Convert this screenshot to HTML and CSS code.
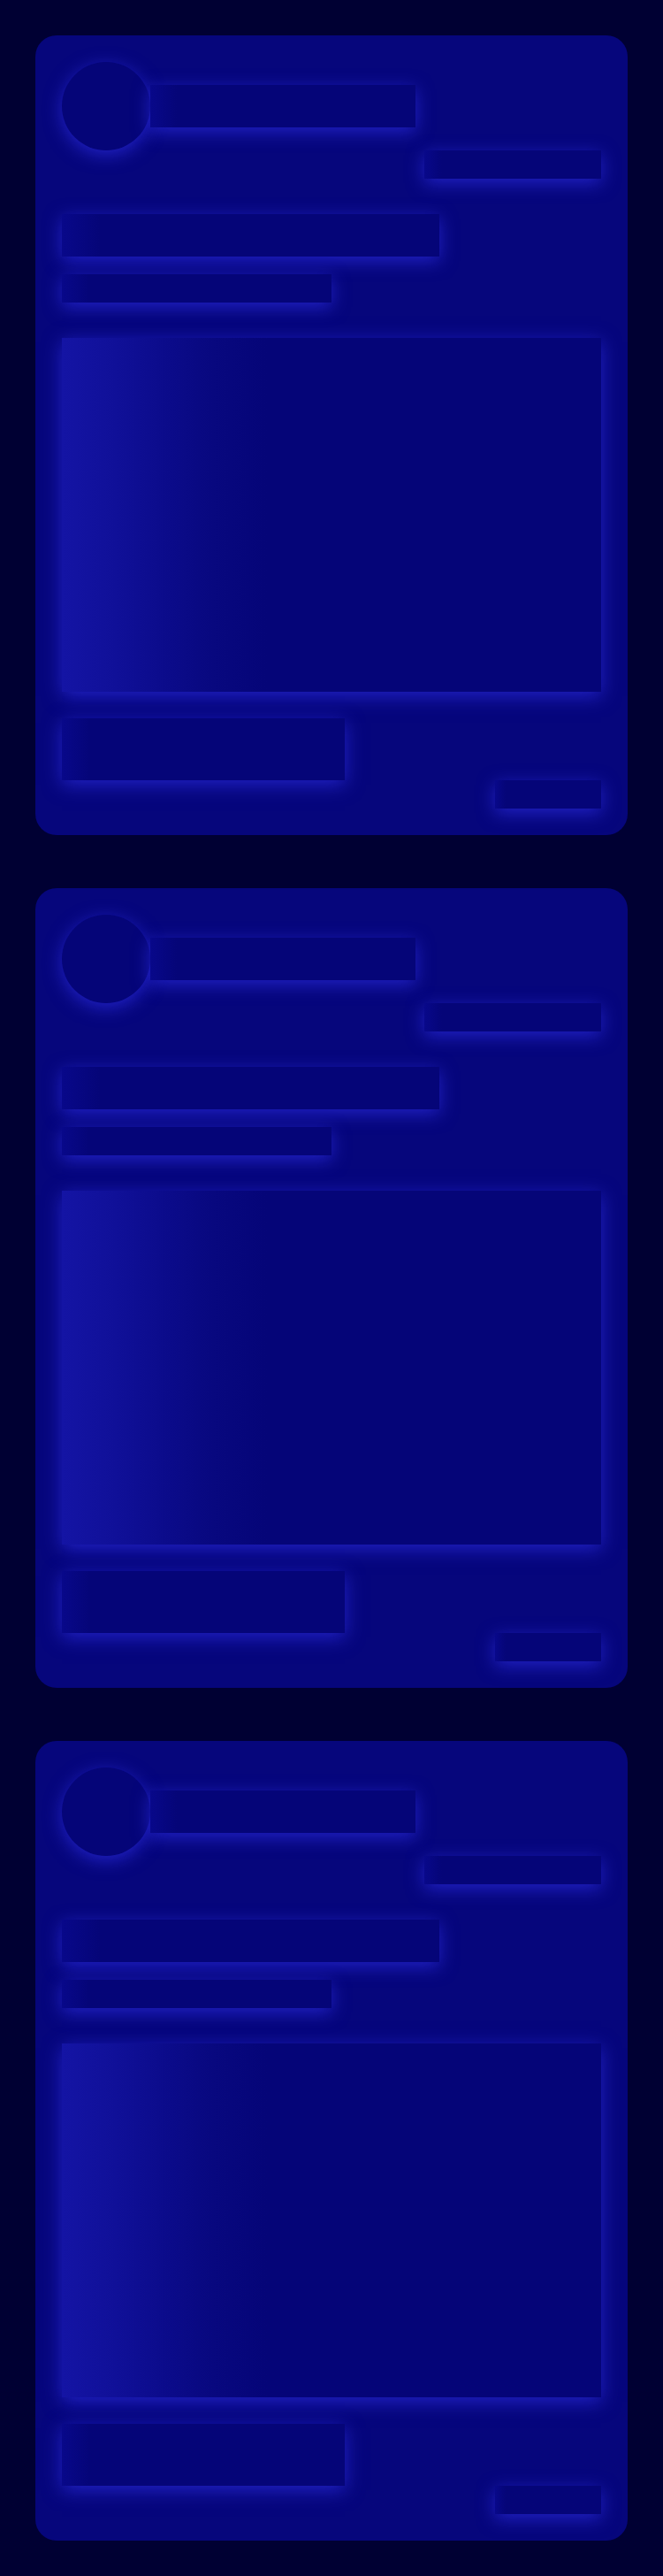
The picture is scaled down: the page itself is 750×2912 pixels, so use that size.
FILE: index.html
```html
<!DOCTYPE html>
<html>
<head>
<meta charset="utf-8">
<link rel="stylesheet" href="styles.css">
</head>
<body>
<main class="feed">
  <article class="card">
    <div class="head">
      <div class="sk avatar"></div>
      <div class="sk title"></div>
    </div>
    <div class="sk meta"></div>
    <div class="sk line-a"></div>
    <div class="sk line-b"></div>
    <div class="sk media"></div>
    <div class="sk foot"></div>
    <div class="sk action"></div>
  </article>
  <article class="card">
    <div class="head">
      <div class="sk avatar"></div>
      <div class="sk title"></div>
    </div>
    <div class="sk meta"></div>
    <div class="sk line-a"></div>
    <div class="sk line-b"></div>
    <div class="sk media"></div>
    <div class="sk foot"></div>
    <div class="sk action"></div>
  </article>
  <article class="card">
    <div class="head">
      <div class="sk avatar"></div>
      <div class="sk title"></div>
    </div>
    <div class="sk meta"></div>
    <div class="sk line-a"></div>
    <div class="sk line-b"></div>
    <div class="sk media"></div>
    <div class="sk foot"></div>
    <div class="sk action"></div>
  </article>
</main>
</body>
</html>
```
FILE: styles.css
```css
html, body {
  margin: 0;
  padding: 0;
  background: #000033;
}
.feed {
  padding: 40px;
  display: flex;
  flex-direction: column;
  gap: 60px;
}
.card {
  background: #06067c;
  border-radius: 24px;
  padding: 30px;
  display: flex;
  flex-direction: column;
}
.sk {
  background: linear-gradient(90deg, #08088a 0%, #050578 10%, #050578 100%);
  box-shadow: 0 5px 20px rgba(40, 40, 215, 0.8);
}
.head {
  display: flex;
  align-items: center;
}
.avatar {
  width: 100px;
  height: 100px;
  border-radius: 50%;
  background: #050578;
}
.title {
  width: 300px;
  height: 48px;
}
.meta {
  width: 200px;
  height: 32px;
  align-self: flex-end;
}
.line-a {
  margin-top: 40px;
  width: 70%;
  height: 48px;
}
.line-b {
  margin-top: 20px;
  width: 50%;
  height: 32px;
}
.media {
  margin-top: 40px;
  height: 400px;
  background: linear-gradient(90deg, #1414a4 0%, #101098 10%, #0b0b8a 20%, #08087f 28%, #050578 38%, #050578 100%);
}
.foot {
  margin-top: 30px;
  width: 320px;
  height: 70px;
}
.action {
  width: 120px;
  height: 32px;
  align-self: flex-end;
}
```
